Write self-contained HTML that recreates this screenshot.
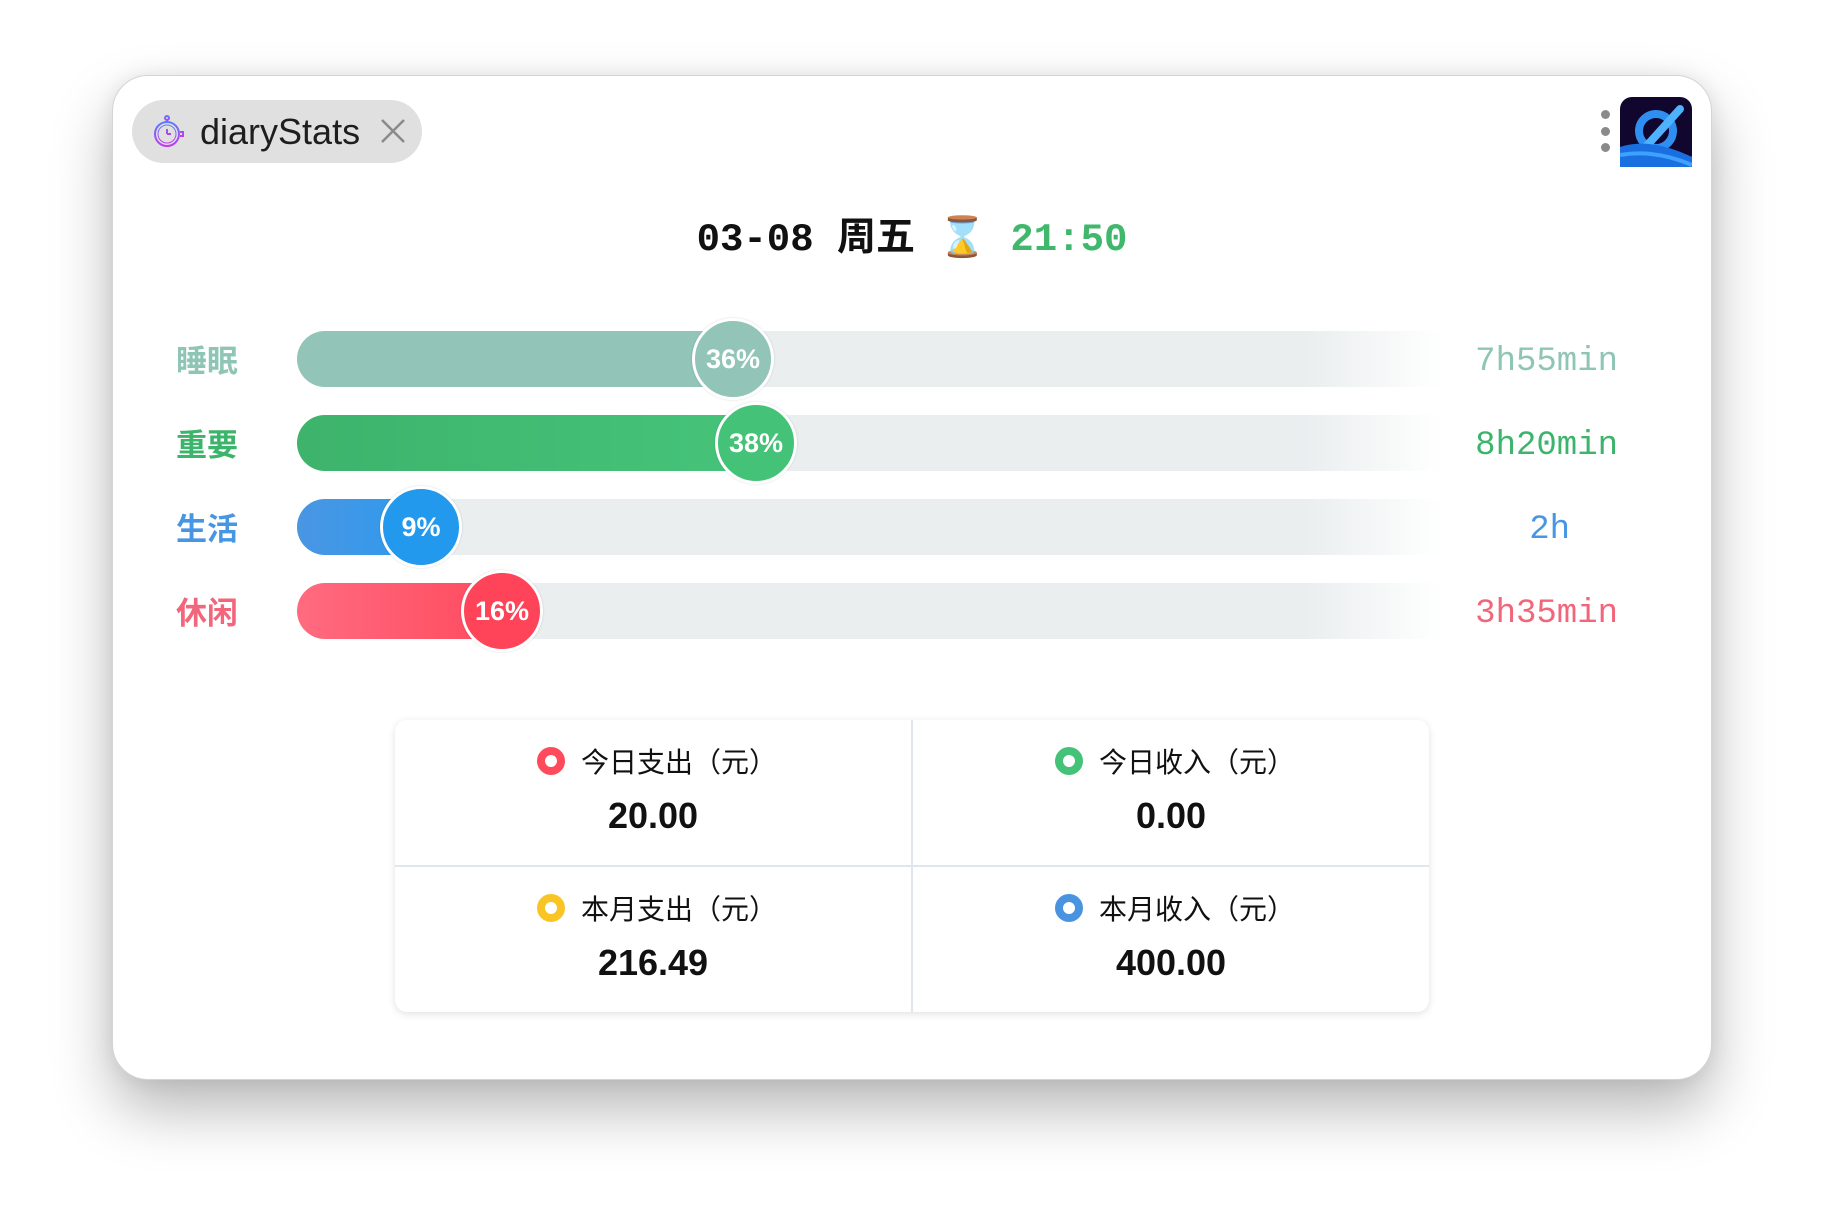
<!DOCTYPE html>
<html><head><meta charset="utf-8"><style>
*{margin:0;padding:0;box-sizing:border-box}
body{width:1824px;height:1228px;background:#fff;position:relative;overflow:hidden;font-family:"Liberation Sans","Noto Sans CJK SC",sans-serif}
.win{position:absolute;left:112px;top:75px;width:1600px;height:1005px;border-radius:36px;background:#fff;border:1px solid #d4d4d4;box-shadow:0 30px 60px rgba(0,0,0,.28),0 0 20px rgba(0,0,0,.08)}
.pill{position:absolute;left:132px;top:100px;width:290px;height:63px;border-radius:32px;background:#e0e0e0}
.pill .t{position:absolute;left:68px;top:11px;font-size:36px;color:#1e1e1e}
.pill .x{position:absolute;left:248px;top:18px}
.title{position:absolute;left:0;width:1824px;top:206px;text-align:center;font-size:39px;font-weight:bold;font-family:"Liberation Mono","Noto Sans CJK SC",monospace;color:#111}
.lbl{position:absolute;left:176px;font-size:31px;font-weight:bold;line-height:56px;top:3px}
.track{position:absolute;left:297px;width:1145px;height:56px;border-radius:28px 0 0 28px;background:linear-gradient(90deg,#eaeeef 0%,#eaeeef 88%,rgba(234,238,239,0) 100%)}
.fill{position:absolute;left:297px;height:56px;border-radius:28px 0 0 28px}
.bub{position:absolute;width:82px;height:82px;border-radius:50%;border:3px solid #fff;color:#fff;font-weight:bold;font-size:27px;text-align:center;line-height:76px;box-shadow:0 0 2px rgba(0,0,0,.15)}
.tm{position:absolute;right:206px;font-family:"Liberation Mono",monospace;font-size:34px;line-height:56px}
.card{position:absolute;left:395px;top:720px;width:1034px;height:292px;border-radius:12px;background:#fff;box-shadow:0 2px 8px rgba(0,0,0,.12)}
.cell{position:absolute;width:516px;height:145px;text-align:center}
.cl{margin-top:21px;font-size:28px;color:#111;display:flex;justify-content:center;align-items:center;gap:16px;padding-left:8px}
.dot{width:28px;height:28px;border-radius:50%;border:8px solid}
.cv{font-size:36px;font-weight:bold;color:#111;margin-top:14px}
</style></head><body>
<div class="win"></div>
<div class="pill">
<svg style="position:absolute;left:20px;top:14px" width="34" height="36" viewBox="0 0 34 36"><defs><linearGradient id="g" x1="0" y1="0" x2="0" y2="1"><stop offset="0" stop-color="#5a7bff"/><stop offset="1" stop-color="#c03cf0"/></linearGradient></defs><g fill="none" stroke="url(#g)" stroke-width="2"><circle cx="15" cy="20" r="12"/><circle cx="15" cy="20" r="9" stroke-width="1"/><circle cx="15" cy="4" r="2"/><path d="M15 6v2M15 20v-5M15 20h4M28 18h3v4h-3"/></g></svg>
<span class="t">diaryStats</span>
<svg class="x" width="26" height="26" viewBox="0 0 26 26"><path d="M2 2L24 24M24 2L2 24" stroke="#8a8a8a" stroke-width="2.5"/></svg>
</div>
<div style="position:absolute;left:1601px;top:110px;width:9px;height:9px;border-radius:50%;background:#8a8a8a"></div>
<div style="position:absolute;left:1601px;top:127px;width:9px;height:9px;border-radius:50%;background:#8a8a8a"></div>
<div style="position:absolute;left:1601px;top:143px;width:9px;height:9px;border-radius:50%;background:#8a8a8a"></div>
<svg style="position:absolute;left:1620px;top:97px" width="72" height="70" viewBox="0 0 72 70"><rect width="72" height="70" rx="12" fill="#10062e"/><circle cx="36" cy="34" r="17" fill="none" stroke="#2f8ff0" stroke-width="8"/><path d="M60 12L22 54" stroke="#4fb2ff" stroke-width="8" stroke-linecap="round"/><path d="M0 50Q30 40 72 60L72 70H0Z" fill="#1a6fe0"/><path d="M0 58Q35 52 72 68" stroke="#3ea0ff" stroke-width="4" fill="none"/></svg>
<div class="title">03-08 周五 <span style="font-weight:normal">⌛</span> <span style="color:#3fb86c">21:50</span></div>

<div class="lbl" style="top:334px;color:#8fc5b5">睡眠</div>
<div class="track" style="top:331px"></div>
<div class="fill" style="top:331px;width:436px;background:#92c5b7"></div>
<div class="bub" style="left:692px;top:318px;background:#92c5b7">36%</div>
<div class="tm" style="top:334px;color:#8fc5b5">7h55min</div>

<div class="lbl" style="top:418px;color:#3db46c">重要</div>
<div class="track" style="top:415px"></div>
<div class="fill" style="top:415px;width:459px;background:linear-gradient(90deg,#3db36c,#46c47a)"></div>
<div class="bub" style="left:715px;top:402px;background:#44c277">38%</div>
<div class="tm" style="top:418px;color:#3db46c">8h20min</div>

<div class="lbl" style="top:502px;color:#4796e3">生活</div>
<div class="track" style="top:499px"></div>
<div class="fill" style="top:499px;width:124px;background:linear-gradient(90deg,#4a96e2,#2e9aee)"></div>
<div class="bub" style="left:380px;top:486px;background:#2299ec">9%</div>
<div class="tm" style="top:502px;color:#4796e3;right:254px">2h</div>

<div class="lbl" style="top:586px;color:#f2667b">休闲</div>
<div class="track" style="top:583px"></div>
<div class="fill" style="top:583px;width:205px;background:linear-gradient(90deg,#ff6b80,#ff4a5e)"></div>
<div class="bub" style="left:461px;top:570px;background:#ff4459">16%</div>
<div class="tm" style="top:586px;color:#f2667b">3h35min</div>

<div class="card">
<div style="position:absolute;left:516px;top:0;width:2px;height:292px;background:#e1e6ee"></div>
<div style="position:absolute;left:0;top:145px;width:1034px;height:2px;background:#e1e6ee"></div>
<div class="cell" style="left:0;top:0"><div class="cl"><span class="dot" style="border-color:#ff4a5c"></span>今日支出（元）</div><div class="cv">20.00</div></div>
<div class="cell" style="left:518px;top:0"><div class="cl"><span class="dot" style="border-color:#44c277"></span>今日收入（元）</div><div class="cv">0.00</div></div>
<div class="cell" style="left:0;top:147px"><div class="cl"><span class="dot" style="border-color:#f8c525"></span>本月支出（元）</div><div class="cv">216.49</div></div>
<div class="cell" style="left:518px;top:147px"><div class="cl"><span class="dot" style="border-color:#4a93e0"></span>本月收入（元）</div><div class="cv">400.00</div></div>
</div>
</body></html>
